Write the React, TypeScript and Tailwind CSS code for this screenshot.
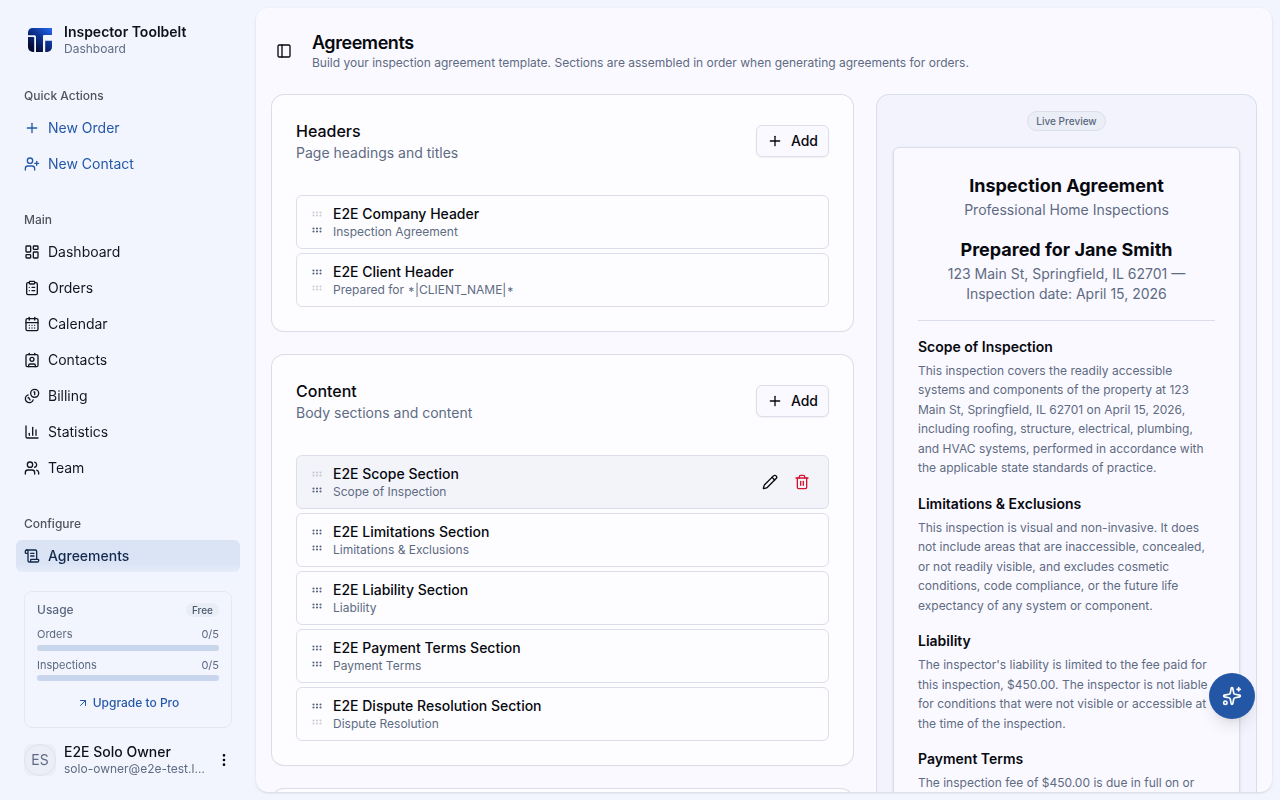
import {
  ArrowUpRight,
  CalendarDays,
  ChartColumn,
  ClipboardList,
  Contact,
  EllipsisVertical,
  GripHorizontal,
  LayoutDashboard,
  PanelLeft,
  Pencil,
  Plus,
  ScrollText,
  Sparkles,
  Trash2,
  UserPlus,
  Users,
} from 'lucide-react';
import type { ComponentType } from 'react';
import { clsx } from 'clsx';

type IconType = ComponentType<{ size?: number | string }>;

type NavItem = { label: string; icon: IconType; active?: boolean };

type Section = { name: string; heading: string; hovered?: boolean };

// Two overlapping coins, larger one at the top right
function CoinsIcon({ size = 16 }: { size?: number | string }) {
  return (
    <svg
      width={size}
      height={size}
      viewBox="0 0 24 24"
      fill="none"
      stroke="currentColor"
      strokeWidth="2"
      strokeLinecap="round"
      strokeLinejoin="round"
    >
      <path d="M13.744 17.736a6 6 0 1 1-7.482-7.482" />
      <path d="M15 6h1v4" />
      <path d="m6.134 14.768.866-.5 2 3.464" />
      <circle cx="16" cy="8" r="6" />
    </svg>
  );
}

const quickActions: NavItem[] = [
  { label: 'New Order', icon: Plus },
  { label: 'New Contact', icon: UserPlus },
];

const mainNav: NavItem[] = [
  { label: 'Dashboard', icon: LayoutDashboard },
  { label: 'Orders', icon: ClipboardList },
  { label: 'Calendar', icon: CalendarDays },
  { label: 'Contacts', icon: Contact },
  { label: 'Billing', icon: CoinsIcon },
  { label: 'Statistics', icon: ChartColumn },
  { label: 'Team', icon: Users },
];

const configureNav: NavItem[] = [{ label: 'Agreements', icon: ScrollText, active: true }];

const headerSections: Section[] = [
  { name: 'E2E Company Header', heading: 'Inspection Agreement' },
  { name: 'E2E Client Header', heading: 'Prepared for *|CLIENT_NAME|*' },
];

const contentSections: Section[] = [
  { name: 'E2E Scope Section', heading: 'Scope of Inspection', hovered: true },
  { name: 'E2E Limitations Section', heading: 'Limitations & Exclusions' },
  { name: 'E2E Liability Section', heading: 'Liability' },
  { name: 'E2E Payment Terms Section', heading: 'Payment Terms' },
  { name: 'E2E Dispute Resolution Section', heading: 'Dispute Resolution' },
];

const previewSections = [
  {
    title: 'Scope of Inspection',
    body: 'This inspection covers the readily accessible systems and components of the property at 123 Main St, Springfield, IL 62701 on April 15, 2026, including roofing, structure, electrical, plumbing, and HVAC systems, performed in accordance with the applicable state standards of practice.',
  },
  {
    title: 'Limitations & Exclusions',
    body: 'This inspection is visual and non-invasive. It does not include areas that are inaccessible, concealed, or not readily visible, and excludes cosmetic conditions, code compliance, or the future life expectancy of any system or component.',
  },
  {
    title: 'Liability',
    body: "The inspector's liability is limited to the fee paid for this inspection, $450.00. The inspector is not liable for conditions that were not visible or accessible at the time of the inspection.",
  },
  {
    title: 'Payment Terms',
    body: 'The inspection fee of $450.00 is due in full on or before the date of inspection.',
  },
];

function Logo() {
  return (
    <svg width="24" height="24" viewBox="0 0 24 24" aria-hidden="true">
      <defs>
        <linearGradient id="logo-fill" x1="24" y1="1" x2="7" y2="22" gradientUnits="userSpaceOnUse">
          <stop offset="0" stopColor="#2467f0" />
          <stop offset="0.5" stopColor="#0d3392" />
          <stop offset="1" stopColor="#050c33" />
        </linearGradient>
      </defs>
      <g fill="url(#logo-fill)">
        <path d="M4.5 0H24V7H16.4C15.5 7 15 7.4 15 8.4V24H8V9.2C8 7.8 7.4 7.2 6 7.2H0V4.5A4.5 4.5 0 0 1 4.5 0Z" />
        <path d="M0 9H5C5.9 9 6.2 9.4 6.2 10.2V24H5A5 5 0 0 1 0 19Z" />
        <path d="M17.2 12.8H24V19A5 5 0 0 1 19 24H17.2Z" />
      </g>
    </svg>
  );
}

function NavGroup({ title, items, accent }: { title: string; items: NavItem[]; accent?: boolean }) {
  return (
    <div className="p-2">
      <div className="flex h-8 items-center px-2 text-xs font-medium text-[#50535d]">{title}</div>
      <ul className="flex flex-col gap-1">
        {items.map(({ label, icon: Icon, active }) => (
          <li
            key={label}
            className={clsx(
              'flex h-8 items-center gap-2 rounded-md px-2 text-sm',
              active && 'bg-[#dae4f5] font-medium text-[#14294d]',
              !active && accent && 'text-[#2559a8]',
              !active && !accent && 'text-[#14161f]',
            )}
          >
            <Icon size={16} />
            {label}
          </li>
        ))}
      </ul>
    </div>
  );
}

function UsageMeter({ label, value }: { label: string; value: string }) {
  return (
    <div>
      <div className="flex justify-between text-[11px] leading-[16.5px] text-[#5b687f]">
        <span>{label}</span>
        <span>{value}</span>
      </div>
      <div className="mt-0.5 h-1.5 rounded-full bg-[#c8d5ec]" />
    </div>
  );
}

function Sidebar() {
  return (
    <aside className="flex w-64 shrink-0 flex-col p-2 will-change-transform">
      <div className="p-2">
        <div className="flex h-12 items-center gap-2 p-2">
          <div className="flex size-8 items-center justify-center">
            <Logo />
          </div>
          <div>
            <div className="text-sm leading-[17.5px] font-semibold text-[#0e1119]">Inspector Toolbelt</div>
            <div className="text-xs leading-4 text-[#5e6b82]">Dashboard</div>
          </div>
        </div>
      </div>

      <nav className="relative flex min-h-0 flex-1 flex-col gap-2 overflow-hidden">
        <NavGroup title="Quick Actions" items={quickActions} accent />
        <NavGroup title="Main" items={mainNav} />
        <NavGroup title="Configure" items={configureNav} />
        <div className="absolute inset-x-0 bottom-0 h-5 bg-linear-to-t from-[#f2f5fe] to-transparent" />
      </nav>

      <div className="flex flex-col gap-2 p-2">
        <div className="mx-2 h-[137px] rounded-lg border border-[#e4e8f2] px-3 pt-2.5">
          <div className="flex h-4 items-center justify-between">
            <span className="text-xs font-medium text-[#5b687f]">Usage</span>
            <span className="flex h-3.5 items-center rounded-full bg-[#e9edf6] px-1.5 text-[10px] font-medium text-[#4c586d]">
              Free
            </span>
          </div>
          <div className="mt-2 flex flex-col gap-1.5">
            <UsageMeter label="Orders" value="0/5" />
            <UsageMeter label="Inspections" value="0/5" />
          </div>
          <button className="mt-1.5 flex h-8 w-full items-center justify-center gap-1 text-xs font-medium text-[#2559a8]">
            <ArrowUpRight size={12} />
            Upgrade to Pro
          </button>
        </div>

        <div className="flex h-12 items-center gap-2 p-2">
          <div className="size-8 shrink-0 rounded-lg bg-[#ebeef7]">
            <div className="flex size-8 items-center justify-center rounded-full border border-[#dde1ec] text-sm text-[#5e6b82]">
              ES
            </div>
          </div>
          <div className="min-w-0 flex-1">
            <div className="truncate text-sm leading-[17.5px] font-medium text-[#0e1119]">E2E Solo Owner</div>
            <div className="truncate text-xs leading-4 text-[#5e6b82]">solo-owner@e2e-test.local</div>
          </div>
          <EllipsisVertical size={16} className="shrink-0 text-black" />
        </div>
      </div>
    </aside>
  );
}

// Merge tag asterisks sit on the middle of the line
function MergeText({ text }: { text: string }) {
  return (
    <>
      {text.split(/(\*)/).map((part, index) =>
        part === '*' ? (
          <span key={index} className="inline-block px-[0.8px] align-[-2px] leading-none">
            *
          </span>
        ) : (
          part
        ),
      )}
    </>
  );
}

function SectionRow({ section, first, last }: { section: Section; first: boolean; last: boolean }) {
  return (
    <li
      className={clsx(
        'flex h-[54px] items-center gap-2 rounded-md border border-[#dcdeea] px-3',
        section.hovered && 'bg-[#f3f4fa]',
      )}
    >
      <div className="flex w-4 flex-col items-center text-[#56627b]">
        <span className={clsx('flex h-4 items-center', first && 'opacity-30')}>
          <GripHorizontal size={12} strokeWidth={2.25} />
        </span>
        <span className={clsx('flex h-4 items-center', last && 'opacity-30')}>
          <GripHorizontal size={12} strokeWidth={2.25} />
        </span>
      </div>
      <div className="min-w-0 flex-1">
        <div className="truncate text-sm font-medium text-[#07090f]">{section.name}</div>
        <div className="h-4 truncate text-xs text-[#5e6b82]">
          <MergeText text={section.heading} />
        </div>
      </div>
      {section.hovered && (
        <div className="flex gap-1">
          <button className="flex size-7 items-center justify-center text-[#07090f]" aria-label="Edit">
            <Pencil size={16} />
          </button>
          <button className="flex size-7 items-center justify-center text-[#d3122d]" aria-label="Delete">
            <Trash2 size={16} />
          </button>
        </div>
      )}
    </li>
  );
}

function SectionCard({ title, description, sections }: { title: string; description: string; sections: Section[] }) {
  return (
    <section className="rounded-xl bg-[#fdfdff] p-6 shadow-xs ring-1 ring-[#dcdde6]">
      <div className="mb-8 flex items-center justify-between">
        <div>
          <h2 className="text-base font-medium text-[#07090f]">{title}</h2>
          <p className="text-sm text-[#5e6b82]">{description}</p>
        </div>
        <button className="flex h-8 items-center gap-2 rounded-md border border-[#dcdeea] bg-[#faf9ff] px-2.5 text-sm font-medium text-[#07090f] shadow-xs">
          <Plus size={16} />
          Add
        </button>
      </div>
      <ul className="flex flex-col gap-1">
        {sections.map((section, index) => (
          <SectionRow
            key={section.name}
            section={section}
            first={index === 0}
            last={index === sections.length - 1}
          />
        ))}
      </ul>
    </section>
  );
}

function Preview() {
  return (
    <div className="w-[379px] shrink-0 rounded-xl bg-[#f2f3fc] p-4 ring-1 ring-[#d9deea]">
      <div className="mb-4 flex justify-center">
        <span className="flex h-5 items-center rounded-full border border-[#dadfea] bg-[#ebeef6] px-2 text-[10px] font-medium text-[#5b687f]">
          Live Preview
        </span>
      </div>
      <article className="rounded-md border border-[#d9deea] bg-[#faf9ff] p-6 shadow-sm">
        <header className="border-b border-[#d9deea] pb-[15.75px] text-center">
          <h3 className="text-lg leading-7 font-bold text-[#07090f]">Inspection Agreement</h3>
          <p className="text-sm text-[#5e6b82]">Professional Home Inspections</p>
          <h3 className="mt-4 text-lg leading-7 font-bold text-[#07090f]">Prepared for Jane Smith</h3>
          <p className="text-sm text-[#5e6b82]">
            123 Main St, Springfield, IL 62701 —<br />
            Inspection date: April 15, 2026
          </p>
        </header>
        {previewSections.map(({ title, body }) => (
          <section key={title} className="mt-4">
            <h4 className="mb-1 text-sm font-semibold text-[#07090f]">{title}</h4>
            <p className="text-xs leading-[19.5px] text-[#5e6b82]">{body}</p>
          </section>
        ))}
      </article>
    </div>
  );
}

export default function App() {
  return (
    <div className="flex h-screen overflow-hidden bg-[#f2f5fe] font-['Inter',sans-serif]">
      <Sidebar />
      <main className="my-2 mr-2 flex flex-1 flex-col overflow-hidden rounded-xl bg-[#faf9ff] shadow-sm">
        <header className="mb-px flex h-[86px] shrink-0 items-center px-5">
          <PanelLeft size={16} className="mr-5 text-[#07090f]" />
          <div>
            <h1 className="text-lg leading-6 font-semibold tracking-tight text-[#07090f]">Agreements</h1>
            <p className="text-xs text-[#5e6b82]">
              Build your inspection agreement template. Sections are assembled in order when generating agreements for
              orders.
            </p>
          </div>
        </header>
        <div className="flex items-start gap-6 px-4">
          <div className="flex min-w-0 flex-1 flex-col gap-6">
            <SectionCard title="Headers" description="Page headings and titles" sections={headerSections} />
            <SectionCard title="Content" description="Body sections and content" sections={contentSections} />
            <div className="h-40 rounded-xl bg-[#fdfdff] shadow-xs ring-1 ring-[#dcdde6]" />
          </div>
          <Preview />
        </div>
      </main>
      <button
        className="fixed right-[25px] bottom-[81px] flex size-[46px] items-center justify-center rounded-full bg-[#2456a6] text-white shadow-lg"
        aria-label="Assistant"
      >
        <Sparkles size={20} />
      </button>
    </div>
  );
}
